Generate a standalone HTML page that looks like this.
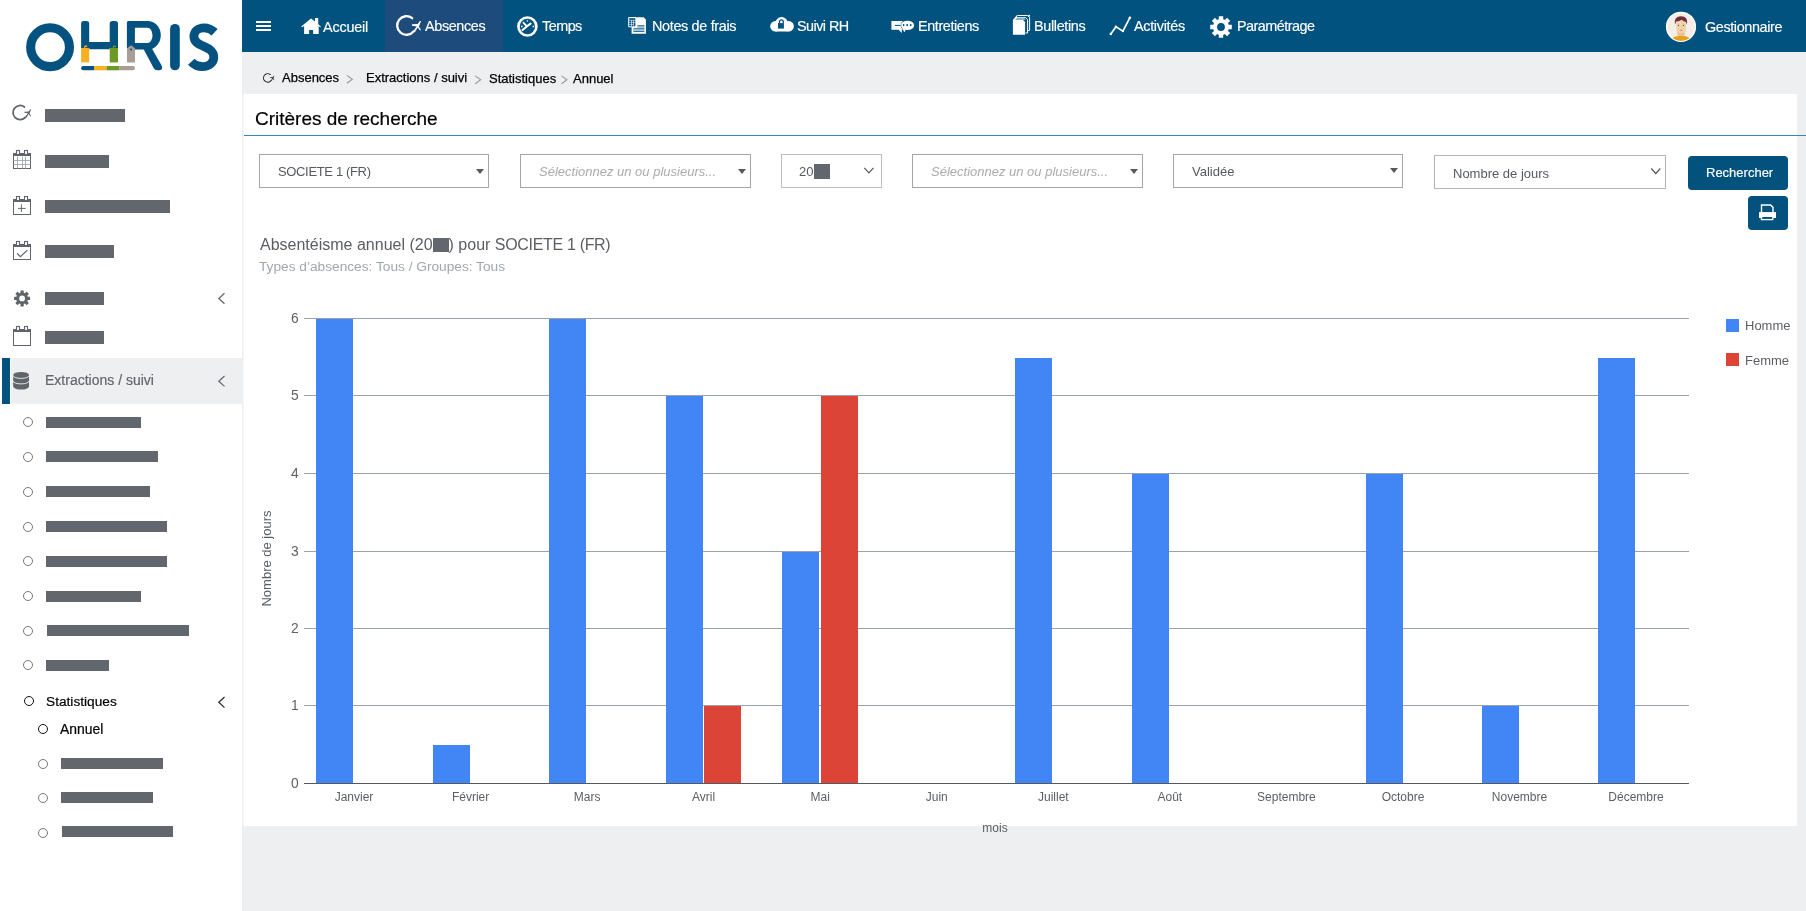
<!DOCTYPE html>
<html lang="fr"><head><meta charset="utf-8"><title>OHRIS - Statistiques annuelles</title>
<style>
*{box-sizing:border-box}
html,body{margin:0;padding:0}
body{width:1806px;height:911px;overflow:hidden;position:relative;background:#eeeff1;font-family:"Liberation Sans",sans-serif;}
.a{position:absolute;white-space:nowrap}
#side{position:absolute;left:0;top:0;width:242px;height:911px;background:#fff}
#nav{position:absolute;left:242px;top:0;width:1564px;height:52px;background:#02527f}
#act{position:absolute;left:385px;top:0;width:118px;height:52px;background:#1c4b7c}
.nt{position:absolute;color:#fff;font-size:14.4px;line-height:14px;white-space:nowrap;-webkit-text-stroke:0.15px #fff}
.bc{position:absolute;color:#000;font-size:13px;line-height:13px;white-space:nowrap;-webkit-text-stroke:0.25px #000}
.sep{position:absolute;color:#999;font-size:13px;line-height:13px}
#panel{position:absolute;left:243px;top:94px;width:1554px;height:732px;background:#fff;border-left:1px solid #f5f6f7}
#title{position:absolute;left:255px;top:109px;font-size:19px;line-height:19px;color:#000;white-space:nowrap;-webkit-text-stroke:0.2px #000}
#tline{position:absolute;left:244px;top:135px;width:1562px;height:1px;background:#3a87b7}
.sel{position:absolute;top:154px;height:34px;border:1px solid #a6a6a6;background:#fff}
.st{position:absolute;font-size:13px;line-height:13px;color:#555a60;white-space:nowrap}
.ph{color:#ababab;font-style:italic}
.tri{position:absolute;width:0;height:0;border-left:4.5px solid transparent;border-right:4.5px solid transparent;border-top:5px solid #555a60}
.bar{position:absolute;height:11px;background:#62676d}
.cir{position:absolute;width:10px;height:10px;border:1px solid #777;border-radius:50%}
.sb{position:absolute;font-size:13px;line-height:13px;white-space:nowrap;-webkit-text-stroke:0.2px currentColor}
</style></head><body>
<div id="root" style="position:absolute;left:0;top:0;width:1806px;height:911px;will-change:transform">

<div id="side"></div>
<div id="nav"></div>
<div id="act"></div>
<div id="panel"></div>
<div id="tline"></div>

<!-- nav texts -->
<div class="nt" style="left:323px;top:20px;letter-spacing:-0.20px">Accueil</div>
<div class="nt" style="left:425px;top:18.6px;letter-spacing:-0.36px">Absences</div>
<div class="nt" style="left:542px;top:18.6px;letter-spacing:-0.52px">Temps</div>
<div class="nt" style="left:652px;top:18.6px;letter-spacing:-0.33px">Notes de frais</div>
<div class="nt" style="left:797px;top:18.6px;letter-spacing:-0.55px">Suivi RH</div>
<div class="nt" style="left:918px;top:18.6px;letter-spacing:-0.40px">Entretiens</div>
<div class="nt" style="left:1034px;top:18.6px;letter-spacing:-0.34px">Bulletins</div>
<div class="nt" style="left:1134px;top:18.6px;letter-spacing:-0.31px">Activités</div>
<div class="nt" style="left:1237px;top:18.6px;letter-spacing:-0.52px">Paramétrage</div>
<div class="nt" style="left:1705px;top:19.6px;letter-spacing:-0.38px">Gestionnaire</div>

<!-- breadcrumb -->
<div class="bc" style="left:282px;top:71px">Absences</div>
<div class="bc" style="left:366px;top:71px">Extractions / suivi</div>
<div class="bc" style="left:489px;top:72px">Statistiques</div>
<div class="bc" style="left:573px;top:72px">Annuel</div>

<div id="title">Critères de recherche</div>

<!-- selects -->
<div class="sel" style="left:259px;width:230px"></div>
<div class="st" style="left:278px;top:165px;letter-spacing:-0.35px">SOCIETE 1 (FR)</div>
<div class="tri" style="left:476px;top:169px"></div>

<div class="sel" style="left:520px;width:231px"></div>
<div class="st ph" style="left:539px;top:165px">Sélectionnez un ou plusieurs...</div>
<div class="tri" style="left:738px;top:169px"></div>

<div class="sel" style="left:781px;width:101px;border-color:#bdbdbd;border-width:1.5px"></div>
<div class="st" style="left:799px;top:165px">20</div>
<div class="a" style="left:814px;top:164px;width:16px;height:15px;background:#62676d"></div>

<div class="sel" style="left:912px;width:231px"></div>
<div class="st ph" style="left:931px;top:165px">Sélectionnez un ou plusieurs...</div>
<div class="tri" style="left:1130px;top:169px"></div>

<div class="sel" style="left:1173px;width:230px"></div>
<div class="st" style="left:1192px;top:165px">Validée</div>
<div class="tri" style="left:1390px;top:168px"></div>

<div class="sel" style="left:1434px;top:155px;width:232px;border-color:#b4b4b4;border-width:1.5px"></div>
<div class="st" style="left:1453px;top:167px">Nombre de jours</div>

<div class="a" style="left:1688px;top:156px;width:100px;height:34px;background:#03527e;border-radius:4px"></div>
<div class="a" style="left:1706px;top:166px;font-size:13px;line-height:13px;color:#fff;-webkit-text-stroke:0.15px #fff">Rechercher</div>
<div class="a" style="left:1748px;top:196px;width:40px;height:34px;background:#03527e;border-radius:4px"></div>

<!-- chart title -->
<div class="a" style="left:260px;top:237px;font-size:16px;line-height:16px;color:#5a5e63">Absentéisme annuel (20<span style="display:inline-block;width:16px;height:14.5px;background:#62676d;vertical-align:-2px"></span>) pour <span style="letter-spacing:-0.32px">SOCIETE 1 (FR)</span></div>
<div class="a" style="left:259px;top:260px;font-size:13.7px;line-height:14px;color:#a0a7ae">Types d’absences: Tous / Groupes: Tous</div>

<!-- sidebar bars -->
<div class="bar" style="left:45px;top:109px;width:80px;height:13px"></div>
<div class="bar" style="left:45px;top:155px;width:64px;height:13px"></div>
<div class="bar" style="left:45px;top:200px;width:125px;height:13px"></div>
<div class="bar" style="left:45px;top:245px;width:69px;height:13px"></div>
<div class="bar" style="left:45px;top:292px;width:59px;height:13px"></div>
<div class="bar" style="left:45px;top:331px;width:59px;height:13px"></div>

<div class="a" style="left:11px;top:358px;width:231px;height:46px;background:#eeeff1"></div>
<div class="a" style="left:2px;top:358px;width:8px;height:46px;background:#02527f"></div>
<div class="sb" style="left:45px;top:373px;font-size:14px;line-height:14px;color:#62666b">Extractions / suivi</div>

<div class="cir" style="left:23px;top:417px"></div><div class="bar" style="left:46px;top:417px;width:95px"></div>
<div class="cir" style="left:23px;top:452px"></div><div class="bar" style="left:46px;top:451px;width:112px"></div>
<div class="cir" style="left:23px;top:487px"></div><div class="bar" style="left:46px;top:486px;width:104px"></div>
<div class="cir" style="left:23px;top:522px"></div><div class="bar" style="left:46px;top:521px;width:121px"></div>
<div class="cir" style="left:23px;top:556px"></div><div class="bar" style="left:46px;top:556px;width:121px"></div>
<div class="cir" style="left:23px;top:591px"></div><div class="bar" style="left:46px;top:591px;width:95px"></div>
<div class="cir" style="left:23px;top:626px"></div><div class="bar" style="left:47px;top:625px;width:142px"></div>
<div class="cir" style="left:23px;top:660px"></div><div class="bar" style="left:46px;top:660px;width:63px"></div>

<div class="cir" style="left:24px;top:696px;border:1.3px solid #111"></div>
<div class="sb" style="left:46px;top:695px;font-size:13.7px;line-height:14px;color:#000">Statistiques</div>
<div class="cir" style="left:38px;top:724px;border:1.3px solid #111"></div>
<div class="sb" style="left:60px;top:722px;font-size:13.9px;line-height:14px;color:#000">Annuel</div>

<div class="cir" style="left:38px;top:759px"></div><div class="bar" style="left:61px;top:758px;width:102px"></div>
<div class="cir" style="left:38px;top:793px"></div><div class="bar" style="left:61px;top:792px;width:92px"></div>
<div class="cir" style="left:38px;top:828px"></div><div class="bar" style="left:62px;top:826px;width:111px"></div>

<!-- CHART -->
<svg class="a" style="left:0;top:0" width="1806" height="911" viewBox="0 0 1806 911" font-family="Liberation Sans">
<g fill="#9aa2ab">
<rect x="304" y="318" width="1385" height="1"/>
<rect x="304" y="395" width="1385" height="1"/>
<rect x="304" y="473" width="1385" height="1"/>
<rect x="304" y="551" width="1385" height="1"/>
<rect x="304" y="628" width="1385" height="1"/>
<rect x="304" y="705" width="1385" height="1"/>
</g>
<g id="bars">
<rect x="316" y="319" width="37" height="464" fill="#4285f4"/>
<rect x="433" y="745" width="37" height="38" fill="#4285f4"/>
<rect x="549" y="319" width="37" height="464" fill="#4285f4"/>
<rect x="666" y="396" width="37" height="387" fill="#4285f4"/>
<rect x="704" y="706" width="37" height="77" fill="#db4437"/>
<rect x="782" y="552" width="37" height="231" fill="#4285f4"/>
<rect x="821" y="396" width="37" height="387" fill="#db4437"/>
<rect x="1015" y="358" width="37" height="425" fill="#4285f4"/>
<rect x="1132" y="474" width="37" height="309" fill="#4285f4"/>
<rect x="1366" y="474" width="37" height="309" fill="#4285f4"/>
<rect x="1482" y="706" width="37" height="77" fill="#4285f4"/>
<rect x="1598" y="358" width="37" height="425" fill="#4285f4"/>
</g>
<rect x="304" y="783" width="1385" height="1" fill="#555a60"/>
<g font-size="13.8" fill="#5b5f64" text-anchor="end">
<text x="298.6" y="323">6</text><text x="298.6" y="400">5</text><text x="298.6" y="478">4</text>
<text x="298.6" y="556">3</text><text x="298.6" y="633">2</text><text x="298.6" y="710">1</text><text x="298.6" y="788">0</text>
</g>
<text transform="translate(271,558.5) rotate(-90)" font-size="13" fill="#5b5f64" text-anchor="middle">Nombre de jours</text>
<g font-size="12" fill="#5b5f64" text-anchor="middle" id="xl">
<text x="354.0" y="801">Janvier</text>
<text x="470.6" y="801">Février</text>
<text x="587.1" y="801">Mars</text>
<text x="703.6" y="801">Avril</text>
<text x="820.2" y="801">Mai</text>
<text x="936.8" y="801">Juin</text>
<text x="1053.3" y="801">Juillet</text>
<text x="1169.8" y="801">Août</text>
<text x="1286.4" y="801">Septembre</text>
<text x="1403.0" y="801">Octobre</text>
<text x="1519.5" y="801">Novembre</text>
<text x="1636.0" y="801">Décembre</text>
</g>
<text x="995" y="832" font-size="12" fill="#5b5f64" text-anchor="middle">mois</text>
<rect x="1726" y="319" width="13" height="13" fill="#4285f4"/>
<rect x="1726" y="353" width="13" height="13" fill="#db4437"/>
<text x="1745" y="330" font-size="13" fill="#5b5f64">Homme</text>
<text x="1745" y="365" font-size="13" fill="#5b5f64">Femme</text>
</svg>



<!-- LOGO -->
<svg class="a" style="left:0;top:0" width="242" height="90" viewBox="0 0 242 90">
<g fill="#04527f">
<circle cx="50.05" cy="47.2" r="19.4" fill="none" stroke="#04527f" stroke-width="9.1"/>
<!-- H -->
<path d="M81.1,48 V23.6 Q81.1,20.9 83.8,20.9 H86.5 Q89.2,20.9 89.2,23.6 V42 H109.7 V23.6 Q109.7,20.9 112.4,20.9 H115.3 Q118,20.9 118,23.6 V48 H109.7 V49.3 H89.2 V48 Z"/>
<!-- R -->
<path d="M126.9,48.2 V22.4 Q126.9,20.9 128.4,20.9 H147.5 A13.3,14.35 0 0 1 147.5,49.6 H134.9 V43 H147.5 A5,7.6 0 0 0 147.5,27.8 H134.9 V48.2 Z"/>
<path d="M143.5,49 L151.6,48 L161.6,65.5 Q163.6,69.6 159.5,70.3 H157 Q155,70.3 153.9,68.5 Z"/>
<!-- I -->
<path d="M170.1,28.8 A4.85,4.85 0 0 1 179.8,28.8 V65.5 A4.85,4.85 0 0 1 170.1,65.5 Z"/>
</g>
<!-- S -->
<path d="M214.6,32.2 C211.2,29 207.5,27.8 204,27.8 C198,27.8 193.9,31.5 193.9,36.5 C193.9,42.2 198.8,44.2 203.3,46.2 C208.3,48.4 213.8,50.6 213.8,57.3 C213.8,63 208.6,66.6 202.6,66.6 C197.5,66.6 193.8,64.6 191.3,61.8" fill="none" stroke="#04527f" stroke-width="8.8"/>
<!-- tags -->
<rect x="81.1" y="48" width="8.1" height="14.4" fill="#f6b122"/>
<rect x="109.7" y="48" width="8.3" height="14.4" fill="#6d9a27"/>
<path d="M127,48.2 L131,45.3 L135,48.2 V62.6 H127 Z" fill="#a99e96"/>
<circle cx="131" cy="49.5" r="1" fill="#04527f"/>
<path d="M84.6,48.6 Q84.2,46.4 85.6,45.9 Q86.8,45.9 86.6,47.2" fill="none" stroke="#f6b122" stroke-width="1.3"/>
<path d="M113.4,48.6 Q113,46.4 114.2,45.9 Q115.4,45.9 115.6,47.2" fill="none" stroke="#6d9a27" stroke-width="1.3"/>
<!-- bottom bar -->
<path d="M83.3,66 H94.1 V70.3 H83.3 A2.15,2.15 0 0 1 83.3,66 Z" fill="#04527f"/>
<rect x="94.1" y="66" width="12.5" height="4.3" fill="#f6b122"/>
<rect x="106.6" y="66" width="12.5" height="4.3" fill="#6d9a27"/>
<path d="M119.1,66 H132.8 A2.15,2.15 0 0 1 132.8,70.3 H119.1 Z" fill="#a99e96"/>
</svg>

<!-- ICONS -->
<svg class="a" style="left:0;top:0" width="1806" height="911" viewBox="0 0 1806 911">

<!-- hamburger -->
<g fill="#fff"><rect x="256" y="21" width="15" height="2"/><rect x="256" y="25" width="15" height="2"/><rect x="256" y="29" width="15" height="2"/></g>
<!-- home -->
<path fill="#fff" d="M311,18.4 L315,21.6 L315,18 L318.2,18 L318.2,24.2 L320.9,26.4 L320.1,27.3 L318.7,26.1 L318.7,34 L313.1,34 L313.1,30 L309.1,30 L309.1,34 L304.1,34 L304.1,26.1 L302.2,27.3 L301.2,26.4 Z"/>
<!-- absences nav -->
<g transform="translate(395.000,14.500) scale(1.0000)" color="#fff"><path d="M17.18,3.67 A9.3,9.3 0 1 0 18.57,16.98" fill="none" stroke="currentColor" stroke-width="2.3" stroke-linecap="round"/>
<path d="M26.1,6.4 L23.9,12.1 L26,15.4 L25.1,16.1 L22.6,13 L19.9,17.7 L18.4,16.6 L21.6,11.9 L17.1,11.3 L16.9,9.8 L22.6,9.5 L25,6.5 Z" fill="currentColor"/></g>
<!-- temps clock -->
<g stroke="#fff" fill="none">
<circle cx="527.4" cy="26.5" r="9.0" stroke-width="2.6"/>
<path d="M523.6,22.8 L526.8,26.4 L530.6,23.6 M526.8,26.4 L522.5,30.1" stroke-width="2" stroke-linecap="round"/>
<path d="M527.4,20.2 V21.6 M521,26.5 H522.6 M532.6,26.5 H534.2" stroke-width="1.4"/>
</g>
<!-- notes de frais -->
<g>
<path d="M631.6,17.2 H643.6 L645.9,19.6 V33.8 H631.6 Z" fill="#fff"/>
<rect x="628.2" y="17.1" width="7.9" height="10.1" rx="0.8" fill="#fff"/>
<g fill="#02527f"><rect x="629.2" y="18.2" width="6.1" height="8.1"/></g>
<g fill="#fff"><rect x="629.2" y="19.9" width="6.1" height="0.6"/><rect x="629.2" y="22.1" width="6.1" height="0.5"/><rect x="629.2" y="24.2" width="4" height="0.5"/>
<rect x="631.1" y="20.3" width="0.6" height="6"/><rect x="633.1" y="20.3" width="0.6" height="6"/></g>
<g fill="#02527f"><rect x="637.4" y="25.3" width="7" height="0.9"/><rect x="633.4" y="28.3" width="11" height="0.9"/><rect x="633.4" y="30.9" width="11" height="0.9"/></g>
<g fill="#7fa6bf"><rect x="637.4" y="26.3" width="7" height="1.4"/><rect x="633.4" y="29.3" width="11" height="1.3"/></g>
</g>
<!-- suivi RH cloud -->
<g fill="#fff"><circle cx="775.5" cy="26.2" r="5.3"/><circle cx="781.6" cy="23.4" r="6.3"/><circle cx="788.6" cy="26.2" r="5.3"/><rect x="775.5" y="23" width="13" height="8.5"/></g>
<g fill="#02527f"><rect x="778" y="23.1" width="5.9" height="5.5"/></g>
<path d="M779.5,23.3 V21.8 A1.9,1.9 0 0 1 783.3,21.8 V23.3" fill="none" stroke="#02527f" stroke-width="1.3"/>
<!-- entretiens -->
<g fill="#fff">
<path d="M891.4,21 H902.5 V29.8 H901.8 V33 L898.6,29.8 H891.4 Z"/>
<ellipse cx="907.5" cy="25.4" rx="6.6" ry="4.7"/>
<path d="M902.6,29 L904.3,32.3 L906,29.6 Z"/>
</g>
<path d="M895,25.4 H900.4" stroke="#02527f" stroke-width="1"/>
<path d="M902.2,22 A4.9,4.9 0 0 0 902.4,28.8" fill="none" stroke="#02527f" stroke-width="0.9" stroke-dasharray="1,0.7"/>
<g fill="#02527f"><ellipse cx="903.6" cy="25.1" rx="0.9" ry="1.1"/><rect x="906.4" y="24.1" width="1.5" height="2"/><ellipse cx="910.7" cy="25.1" rx="0.9" ry="1.1"/></g>
<!-- bulletins -->
<g fill="none" stroke="#fff" stroke-width="1">
<path d="M1017.3,15.5 H1027.5 L1029.6,17.6 V30.5 H1027"/>
<path d="M1015.6,17.5 H1025.6 L1027.6,19.6 V33 H1025.5"/>
</g>
<path d="M1015.6,17.6 H1024.5 L1025.5,20 H1015.4 Z" fill="#8db0c9"/>
<path d="M1012.9,20 L1016.9,15.1 L1017.2,17.4 L1015.4,20 Z" fill="#fff"/>
<path d="M1012.9,20 H1023.2 L1025.1,22 V34.8 H1012.9 Z" fill="#fff"/>
<circle cx="1029.1" cy="15.8" r="1" fill="#fff"/>
<!-- activites -->
<path d="M1110.8,34 L1115.9,26.7 L1122.9,31.1 L1129.9,17.7" fill="none" stroke="#fff" stroke-width="1.7" stroke-linejoin="round"/>
<g fill="#fff"><circle cx="1110.8" cy="34" r="1.3"/><circle cx="1115.9" cy="26.7" r="1.2"/><circle cx="1122.9" cy="31.1" r="1.2"/><circle cx="1129.9" cy="17.7" r="1.3"/></g>
<!-- parametrage gear -->
<g transform="translate(1221.000,27.000) scale(1.0000)" color="#fff"><path fill="currentColor" fill-rule="evenodd" d="M-2.20,-7.69 L-2.20,-10.78 L2.20,-10.78 L2.20,-7.69 A8.00,8.00 0 0 1 3.88,-6.99 L6.07,-9.18 L9.18,-6.07 L6.99,-3.88 A8.00,8.00 0 0 1 7.69,-2.20 L10.78,-2.20 L10.78,2.20 L7.69,2.20 A8.00,8.00 0 0 1 6.99,3.88 L9.18,6.07 L6.07,9.18 L3.88,6.99 A8.00,8.00 0 0 1 2.20,7.69 L2.20,10.78 L-2.20,10.78 L-2.20,7.69 A8.00,8.00 0 0 1 -3.88,6.99 L-6.07,9.18 L-9.18,6.07 L-6.99,3.88 A8.00,8.00 0 0 1 -7.69,2.20 L-10.78,2.20 L-10.78,-2.20 L-7.69,-2.20 A8.00,8.00 0 0 1 -6.99,-3.88 L-9.18,-6.07 L-6.07,-9.18 L-3.88,-6.99 A8.00,8.00 0 0 1 -2.20,-7.69 Z M3.90,0 A3.90,3.90 0 1 0 -3.90,0 A3.90,3.90 0 1 0 3.90,0 Z"/></g>
<!-- avatar -->
<circle cx="1681" cy="26.8" r="14.4" fill="#f4eee7" stroke="#fff" stroke-width="1.4"/>
<g>
<path d="M1672.24,37.97 A11.80,7.80 0 0 1 1689.76,37.97 A14.20,14.20 0 0 1 1672.24,37.97 Z" fill="#e6a21d"/>
<rect x="1677.3" y="30" width="7.6" height="6" rx="2" fill="#e7c098"/>
<rect x="1676.4" y="19.5" width="9.6" height="13.5" rx="3" fill="#f2d3a9"/>
<path d="M1675,24.5 C1674.2,19 1676.5,16.3 1681,16.3 C1685.8,16.3 1687.8,19 1687,24.5 L1686,22 C1684,21.5 1682.5,20.5 1681.5,19.8 C1680,21 1678,21.3 1676.2,21.5 Z" fill="#6e2d3e"/>
<circle cx="1678.4" cy="25.3" r="0.6" fill="#3a2a22"/><circle cx="1683.4" cy="25.3" r="0.6" fill="#3a2a22"/>
<ellipse cx="1681.1" cy="30.2" rx="1.5" ry="0.6" fill="#c98f86"/>
</g>
<!-- breadcrumb icon -->
<g transform="translate(262.514,72.900) scale(0.4545)" color="#222"><path d="M17.18,3.67 A9.3,9.3 0 1 0 18.57,16.98" fill="none" stroke="currentColor" stroke-width="2.3" stroke-linecap="round"/>
<path d="M26.1,6.4 L23.9,12.1 L26,15.4 L25.1,16.1 L22.6,13 L19.9,17.7 L18.4,16.6 L21.6,11.9 L17.1,11.3 L16.9,9.8 L22.6,9.5 L25,6.5 Z" fill="currentColor"/></g>
<g fill="none" stroke="#9a9a9a" stroke-width="1.1">
<path d="M346.9,75.4 L352.3,79.3 L346.9,83.2"/>
<path d="M475.3,75.9 L480.7,79.8 L475.3,83.7"/>
<path d="M561.5,75.9 L566.9,79.8 L561.5,83.7"/>
</g>
<!-- select chevrons -->
<path d="M864.3,167.8 L868.9,172.8 L873.5,167.8" fill="none" stroke="#555a60" stroke-width="1.2"/>
<path d="M1651.3,168.5 L1655.8,173.5 L1660.3,168.5" fill="none" stroke="#555a60" stroke-width="1.2"/>
<!-- print icon -->
<g fill="none" stroke="#fff" stroke-width="1.4">
<path d="M1761.5,212.5 V205 H1770.6 L1773,207.4 V212.5"/>
<path d="M1761.5,217 V219.5 H1772.7 V217"/>
</g>
<path d="M1759,212.1 H1776 V218 H1759 Z" fill="#fff"/>
<rect x="1762.2" y="217" width="10" height="1.8" fill="#03527e"/>

<!-- sidebar icons -->
<g transform="translate(11.402,104.200) scale(0.7591)" color="#5f656b"><path d="M17.18,3.67 A9.3,9.3 0 1 0 18.57,16.98" fill="none" stroke="currentColor" stroke-width="2.3" stroke-linecap="round"/>
<path d="M26.1,6.4 L23.9,12.1 L26,15.4 L25.1,16.1 L22.6,13 L19.9,17.7 L18.4,16.6 L21.6,11.9 L17.1,11.3 L16.9,9.8 L22.6,9.5 L25,6.5 Z" fill="currentColor"/></g>
<rect x="13.5" y="153.5" width="17" height="15" fill="none" stroke="#5f656b" stroke-width="1"/>
<rect x="13" y="153" width="18" height="3" fill="#5f656b"/>
<rect x="16.5" y="150.5" width="3" height="4" fill="#fff" stroke="#5f656b" stroke-width="1.1"/>
<rect x="24.5" y="150.5" width="3" height="4" fill="#fff" stroke="#5f656b" stroke-width="1.1"/>
<rect x="13.5" y="199.5" width="17" height="15" fill="none" stroke="#5f656b" stroke-width="1"/>
<rect x="13" y="199" width="18" height="3" fill="#5f656b"/>
<rect x="16.5" y="196.5" width="3" height="4" fill="#fff" stroke="#5f656b" stroke-width="1.1"/>
<rect x="24.5" y="196.5" width="3" height="4" fill="#fff" stroke="#5f656b" stroke-width="1.1"/>
<rect x="13.5" y="244.5" width="17" height="15" fill="none" stroke="#5f656b" stroke-width="1"/>
<rect x="13" y="244" width="18" height="3" fill="#5f656b"/>
<rect x="16.5" y="241.5" width="3" height="4" fill="#fff" stroke="#5f656b" stroke-width="1.1"/>
<rect x="24.5" y="241.5" width="3" height="4" fill="#fff" stroke="#5f656b" stroke-width="1.1"/>
<rect x="13.5" y="329.5" width="17" height="16" fill="none" stroke="#5f656b" stroke-width="1"/>
<rect x="13" y="329" width="18" height="3" fill="#5f656b"/>
<rect x="16.5" y="326.5" width="3" height="4" fill="#fff" stroke="#5f656b" stroke-width="1.1"/>
<rect x="24.5" y="326.5" width="3" height="4" fill="#fff" stroke="#5f656b" stroke-width="1.1"/>
<g stroke="#5f656b" stroke-width="1" fill="none">
<path d="M17.5,156.5 V168.5 M22.5,156.5 V168.5 M25.5,156.5 V168.5 M13.5,160.5 H30.5 M13.5,164.5 H30.5" stroke="#a3a7ab" stroke-width="0.9"/>
<path d="M21.4,204.3 V211.9 M18,208.4 H25.7"/>
<path d="M17.1,253.3 L20.4,256.6 L27.4,250.1" stroke-width="1.2"/>
</g>
<g transform="translate(22.100,298.400) scale(0.7417)" color="#5f656b"><path fill="currentColor" fill-rule="evenodd" d="M-2.20,-7.69 L-2.20,-10.78 L2.20,-10.78 L2.20,-7.69 A8.00,8.00 0 0 1 3.88,-6.99 L6.07,-9.18 L9.18,-6.07 L6.99,-3.88 A8.00,8.00 0 0 1 7.69,-2.20 L10.78,-2.20 L10.78,2.20 L7.69,2.20 A8.00,8.00 0 0 1 6.99,3.88 L9.18,6.07 L6.07,9.18 L3.88,6.99 A8.00,8.00 0 0 1 2.20,7.69 L2.20,10.78 L-2.20,10.78 L-2.20,7.69 A8.00,8.00 0 0 1 -3.88,6.99 L-6.07,9.18 L-9.18,6.07 L-6.99,3.88 A8.00,8.00 0 0 1 -7.69,2.20 L-10.78,2.20 L-10.78,-2.20 L-7.69,-2.20 A8.00,8.00 0 0 1 -6.99,-3.88 L-9.18,-6.07 L-6.07,-9.18 L-3.88,-6.99 A8.00,8.00 0 0 1 -2.20,-7.69 Z M3.90,0 A3.90,3.90 0 1 0 -3.90,0 A3.90,3.90 0 1 0 3.90,0 Z"/></g>
<!-- database -->
<path d="M13.2,374.9 A7.9,2.9 0 0 1 29,374.9 V386.6 A7.9,2.9 0 0 1 13.2,386.6 Z" fill="#5f656b"/>
<g fill="none" stroke="#eeeff1" stroke-width="0.9">
<path d="M13,375.4 A8.1,3 0 0 0 29.2,375.4"/>
<path d="M13,380.9 A8.1,3 0 0 0 29.2,380.9"/>
</g>
<!-- chevrons sidebar -->
<g fill="none" stroke="#5f656b" stroke-width="1.2">
<path d="M224.5,293.2 L218.8,298.5 L224.5,303.8"/>
<path d="M224.5,376 L218.8,381.2 L224.5,386.4"/>
<path d="M224.5,697 L218.8,702.3 L224.5,707.6" stroke="#222"/>
</g>
</svg>

</div>
</body></html>
